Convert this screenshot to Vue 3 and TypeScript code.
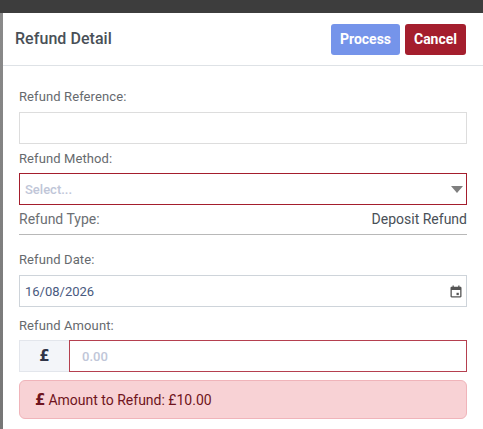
<script setup lang="ts">
const currency = '£'
</script>

<template>
  <div class="page">
    <div class="topbar"></div>
    <div class="body">
      <div class="strip"></div>
      <div class="modal">
        <header class="head">
          <h1 class="title">Refund Detail</h1>
          <div class="actions">
            <button class="btn process">Process</button>
            <button class="btn cancel">Cancel</button>
          </div>
        </header>
        <div class="form">
          <label class="label first">Refund Reference:</label>
          <div class="box"></div>
          <label class="label method">Refund Method:</label>
          <div class="box invalid select">
            <span class="placeholder">Select...</span>
            <span class="caret"></span>
          </div>
          <div class="type">
            <span>Refund Type:</span>
            <span class="value">Deposit Refund</span>
          </div>
          <label class="label date">Refund Date:</label>
          <div class="box dark datebox">
            <span class="datev">16/08/2026</span>
            <svg class="cal" width="12" height="13" viewBox="0 0 12 13">
              <path fill="#555" d="M2.5 0.5h1.3v1.3h4.4V0.5h1.3v1.3h.8c.7 0 1.2.5 1.2 1.2v8.3c0 .7-.5 1.2-1.2 1.2H1.7c-.7 0-1.2-.5-1.2-1.2V3c0-.7.5-1.2 1.2-1.2h.8V.5zM1.8 5v6.2h8.4V5H1.8z"/>
              <rect x="6.5" y="7.8" width="2.3" height="2.3" fill="#555"/>
            </svg>
          </div>
          <label class="label amount">Refund Amount:</label>
          <div class="group">
            <span class="prefix">{{ currency }}</span>
            <div class="amount-input"><span class="placeholder zero">0.00</span></div>
          </div>
          <div class="alert"><b class="pound">{{ currency }}</b>Amount to Refund: £10.00</div>
        </div>
      </div>
    </div>
  </div>
</template>

<style scoped>
.page { width: 483px; height: 429px; overflow: hidden; display: flex; flex-direction: column; font-family: Roboto, "Liberation Sans", sans-serif; }
.topbar { height: 13px; background: #3d3d3d; flex: none; }
.body { flex: 1; display: flex; min-height: 0; background: #fff; }
.strip { width: 3px; background: linear-gradient(#8a8a8a, #767676); flex: none; }
.modal { flex: 1; background: #fff; min-width: 0; }
.head { height: 53px; box-sizing: border-box; border-bottom: 1px solid #dee2e6; display: flex; align-items: flex-start; justify-content: space-between; padding: 11px 17px 0 12px; }
.title { margin: 0; font-size: 16px; line-height: 29px; font-weight: 500; color: #495057; letter-spacing: .05px; }
.actions { display: flex; gap: 5px; }
.btn { height: 31px; border: 0; border-radius: 3px; color: #fff; font: 700 14px/31px Roboto, "Liberation Sans", sans-serif; padding: 0; }
.process { width: 69px; background: #7594ea; }
.cancel { width: 61px; background: #a41e2d; }
.form { padding: 0 16px; display: flex; flex-direction: column; }
.label { display: block; font-size: 13px; line-height: 15px; color: #666a6e; font-weight: 400; letter-spacing: .1px; }
.first { margin-top: 23px; margin-bottom: 8px; }
.method { margin-top: 7px; margin-bottom: 7px; }
.date { margin-top: 17px; margin-bottom: 8px; }
.amount { margin-top: 11px; margin-bottom: 7px; }
.box { height: 32px; box-sizing: border-box; border: 1px solid #dddddd; background: #fff; }
.invalid { border-color: #a41e2d; }
.dark { border-color: #ced4da; }
.select { display: flex; align-items: center; justify-content: space-between; padding: 0 3px 0 5px; }
.placeholder { font-size: 13px; color: #c0c6d8; font-weight: 500; }
.caret { width: 0; height: 0; border-left: 6.5px solid transparent; border-right: 6.5px solid transparent; border-top: 7px solid #7f7f7f; }
.type { height: 30px; box-sizing: border-box; border-bottom: 1px solid #b8b8b8; display: flex; justify-content: space-between; align-items: center; font-size: 14px; color: #6c6f73; padding-bottom: 2px; }
.value { color: #495057; }
.datebox { display: flex; align-items: center; justify-content: space-between; padding: 0 4px 0 5px; }
.datev { font-size: 13px; color: #495a80; }
.group { display: flex; height: 32px; }
.prefix { width: 50px; flex: none; box-sizing: border-box; background: #f3f5f9; border: 1px solid #e3e6ec; border-right: 0; text-align: center; font: 700 15px/30px "DejaVu Sans", sans-serif; color: #2f3447; }
.amount-input { flex: 1; box-sizing: border-box; border: 1px solid #b5404f; padding-left: 12px; display: flex; align-items: center; }
.zero { font-size: 13px; color: #c0c6d8; }
.alert { margin-top: 8px; height: 39px; box-sizing: border-box; background: #f8d2d5; border: 1px solid #f0b4ba; border-radius: 6px; padding: 0 15px; display: flex; align-items: center; font-size: 14px; color: #6f1420; white-space: pre; }
.pound { font-family: "DejaVu Sans", sans-serif; font-weight: 700; font-size: 15px; margin-right: 3px; }
</style>
